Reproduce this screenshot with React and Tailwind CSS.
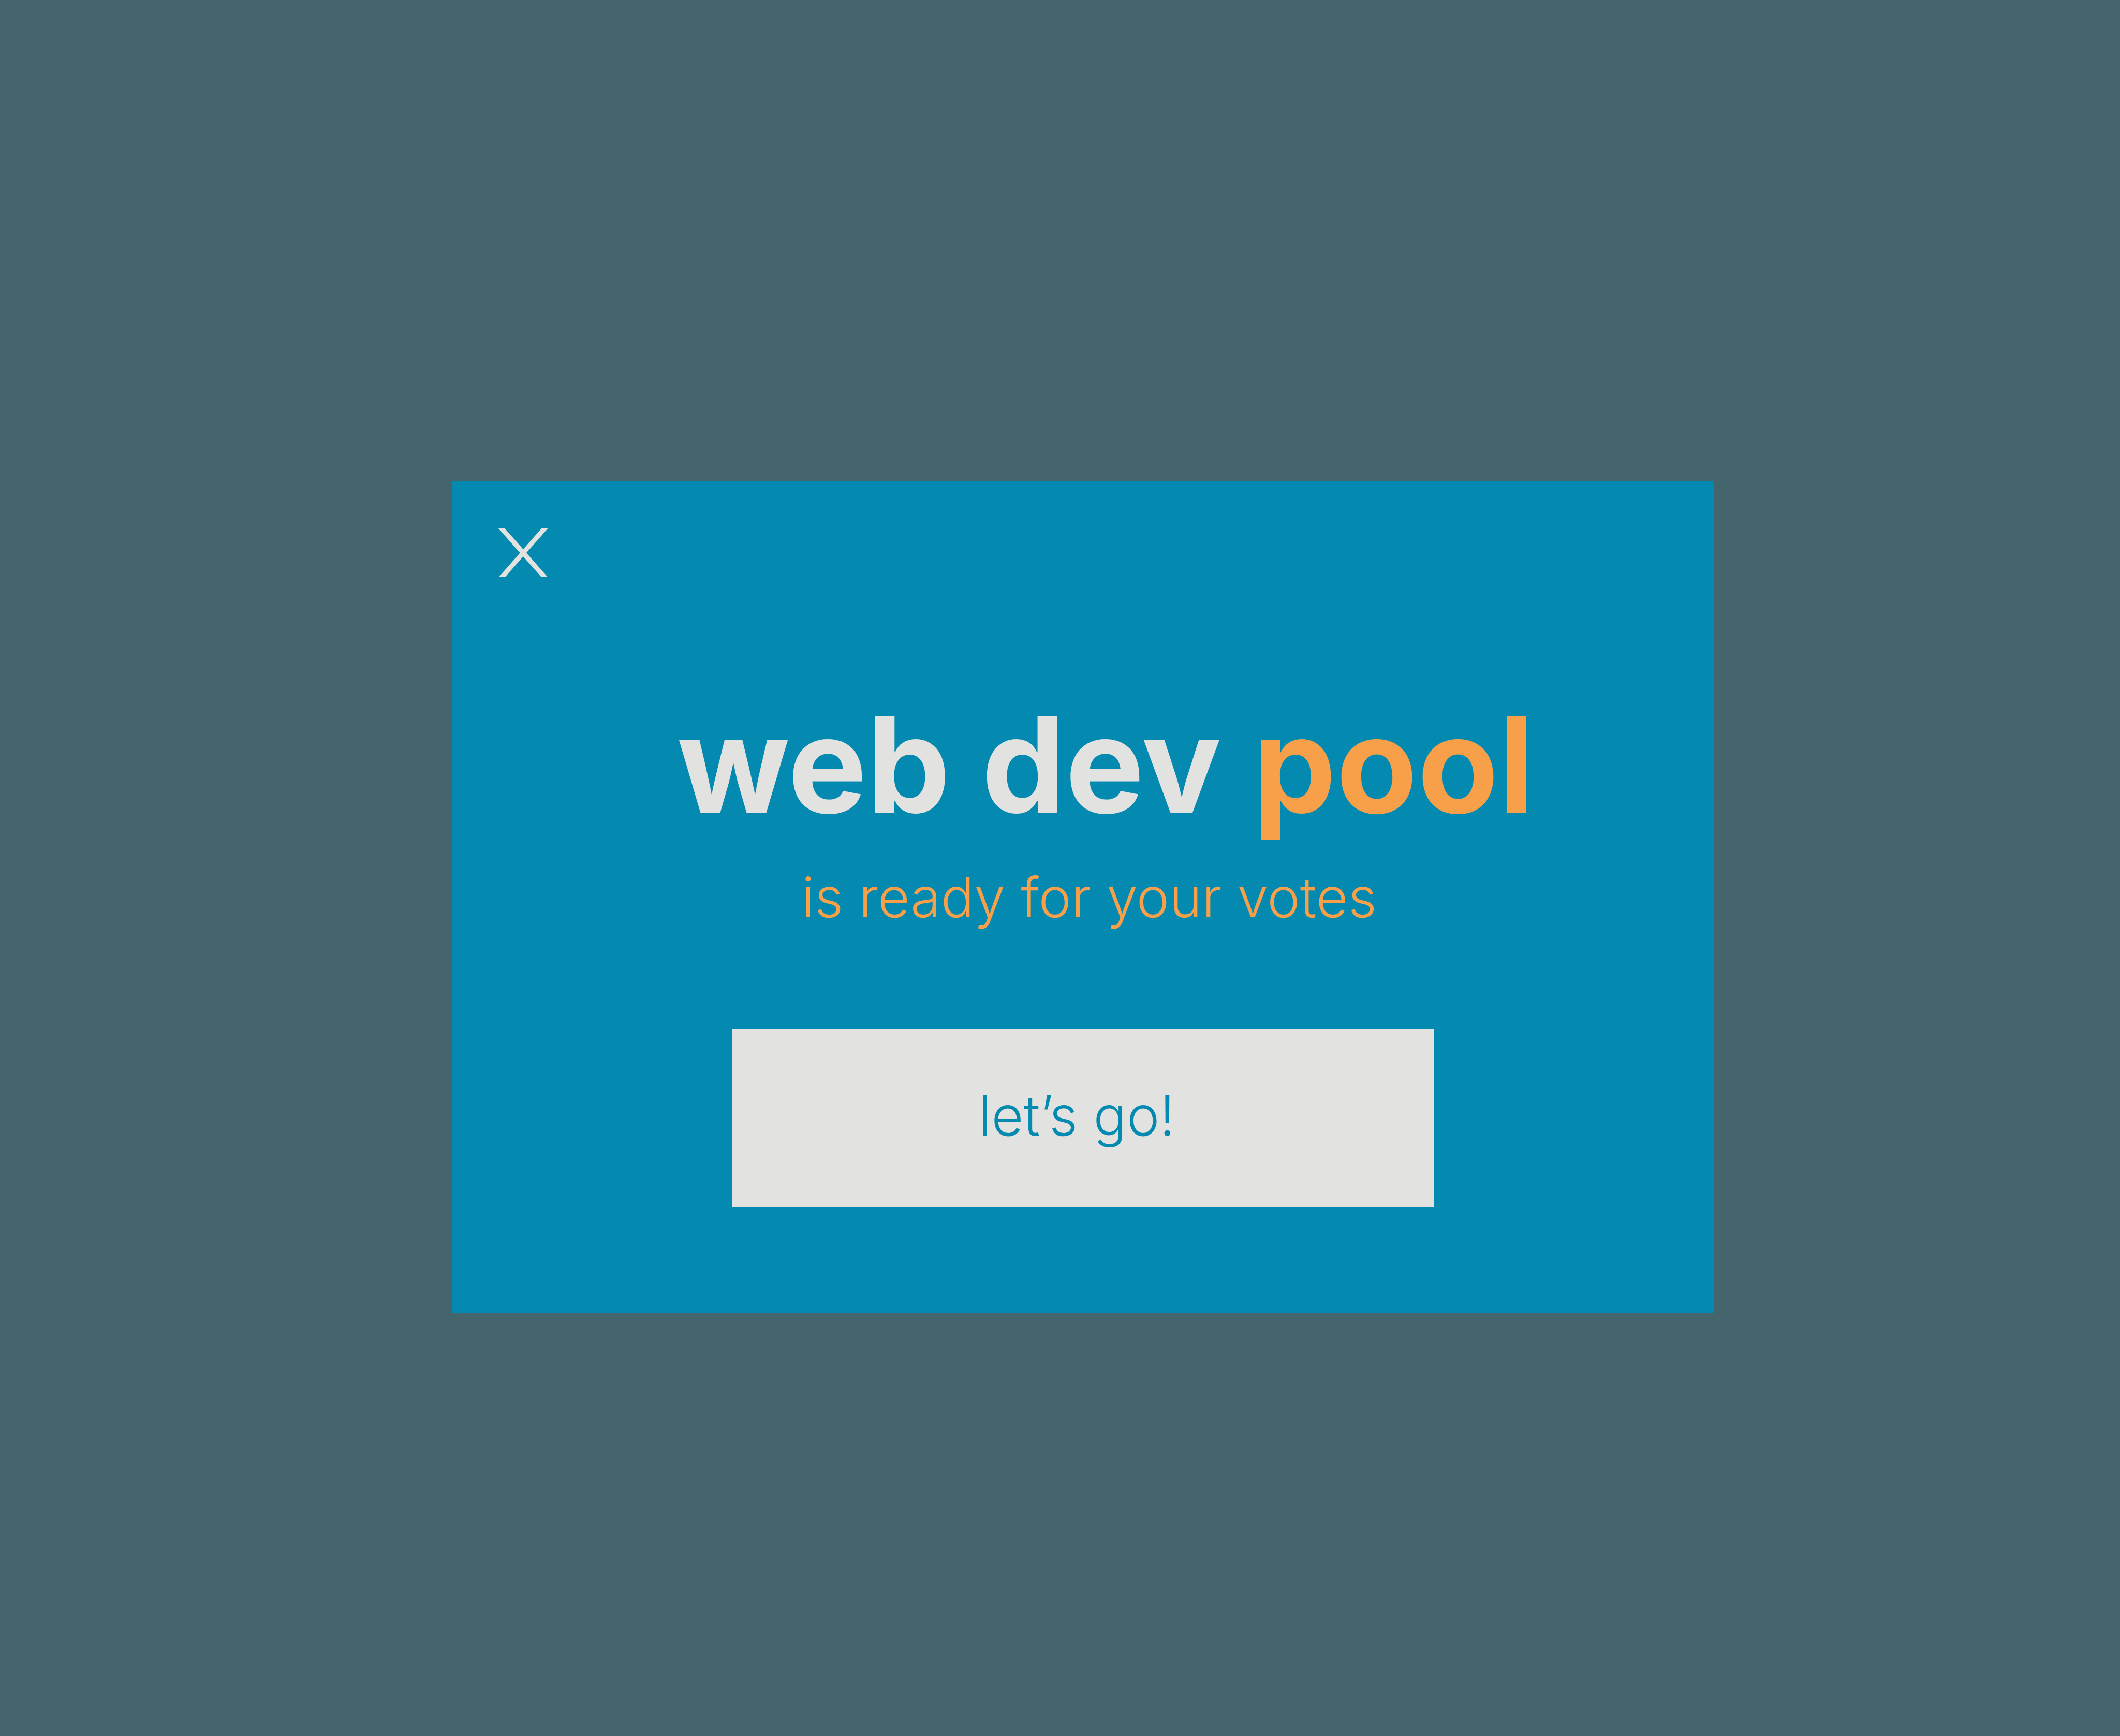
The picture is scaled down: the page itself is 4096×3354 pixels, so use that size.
function CloseIcon() {
  return (
    <svg viewBox="0 0 96 93" className="block h-[93px] w-24" aria-hidden="true">
      <path
        d="M-2 -9.3L96.5 102.3M97.5 -9.3L-0.6 102.3"
        fill="none"
        stroke="currentColor"
        strokeWidth="9.2"
      />
    </svg>
  );
}

export default function App() {
  return (
    <main className="grid min-h-screen grid-cols-[873fr_2439fr_784fr] items-start bg-[#44656b] pt-[930px] font-['Inter',sans-serif]">
      <section
        role="dialog"
        aria-labelledby="dialog-title"
        className="col-start-2 flex flex-col items-center bg-[#048ab0] pt-[91px] pb-[206px]"
      >
        <button type="button" aria-label="Close" className="ml-[90px] self-start text-[#e2e2e0]">
          <CloseIcon />
        </button>

        <h1
          id="dialog-title"
          className="mt-[235px] pl-22 text-[256px] leading-none font-bold whitespace-nowrap text-[#e2e2e0]"
        >
          web dev <span className="text-[#f7a049]">pool</span>
        </h1>

        <p className="mt-[75px] pl-6 text-[107px] leading-none font-light text-[#f7a049]">
          is ready for your votes
        </p>

        <button
          type="button"
          className="mt-[201px] flex h-[343px] w-5/9 items-center justify-center bg-[#e2e2e0] pr-6 pb-2 text-[107px] leading-none font-light text-[#048ab0]"
        >
          let’s go!
        </button>
      </section>
    </main>
  );
}
